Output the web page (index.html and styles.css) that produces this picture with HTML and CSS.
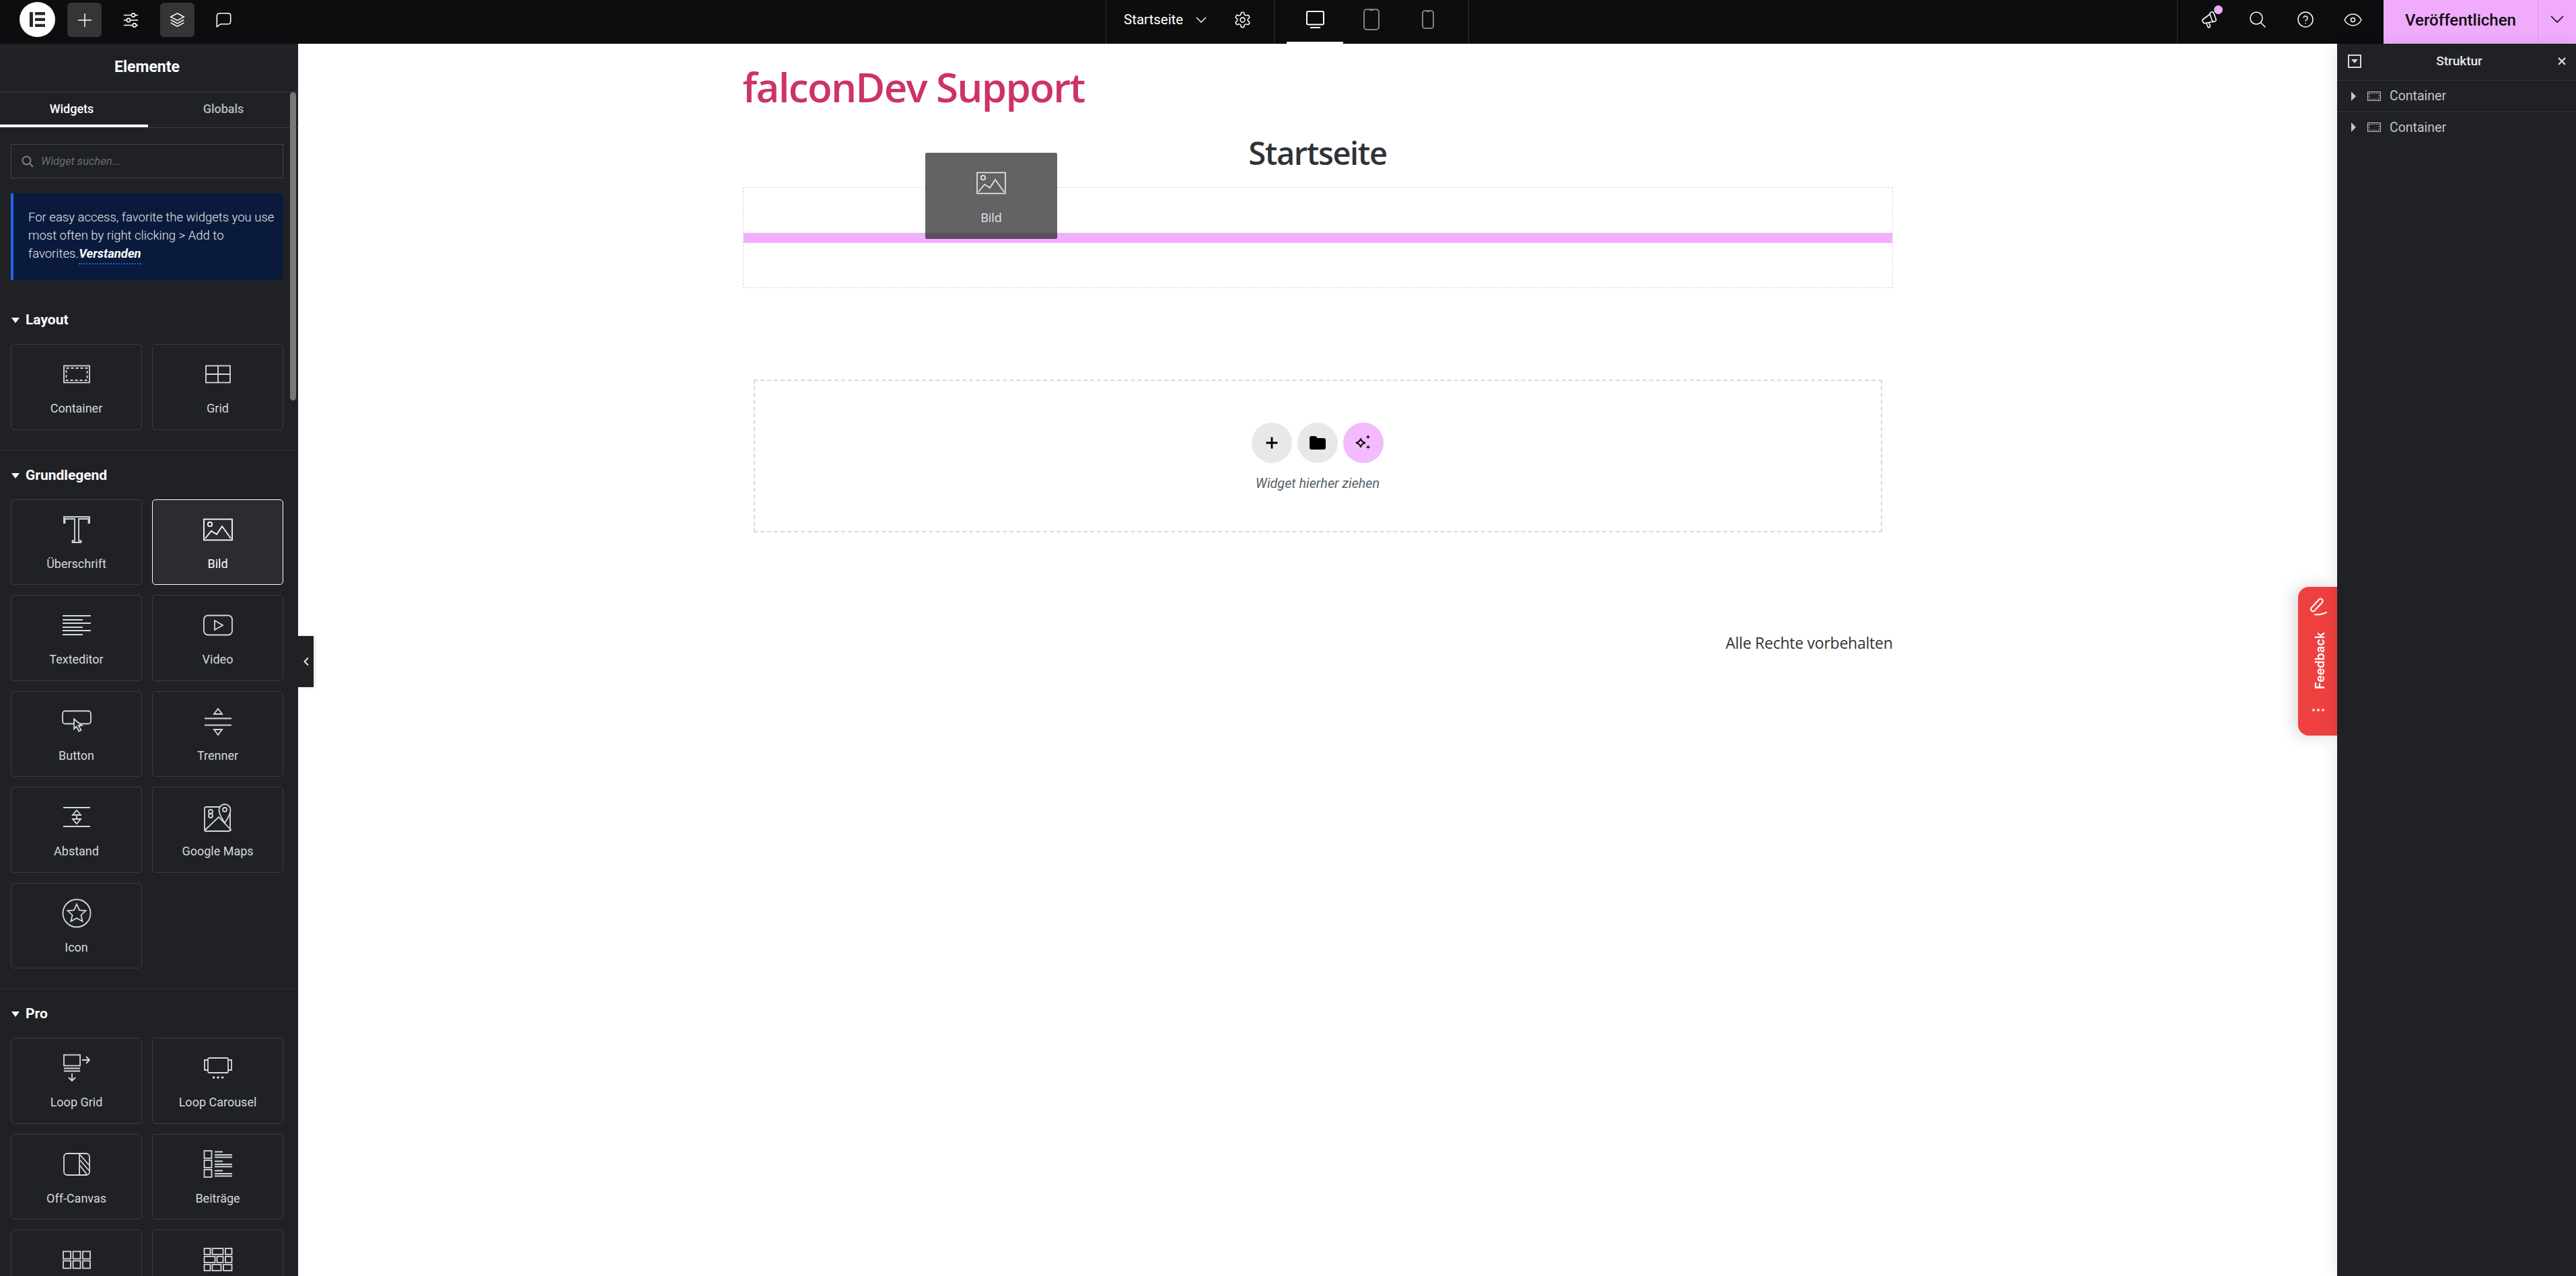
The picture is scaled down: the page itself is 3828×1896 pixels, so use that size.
FILE: index.html
```html
<!DOCTYPE html>
<html lang="de">
<head>
  <meta charset="UTF-8" />
  <title>Elementor - Startseite</title>
  <link rel="stylesheet" href="styles.css">
</head>
<body>
  <!-- Obere Leiste -->
  <header class="topbar">
    <div class="top-left">
      <div class="logo"><svg width="26" height="24" viewBox="0 0 26 24" fill="#26282b"><rect x="1" y="1" width="5" height="22"/><rect x="9" y="1" width="15" height="4.4"/><rect x="9" y="9.8" width="15" height="4.4"/><rect x="9" y="18.6" width="15" height="4.4"/></svg></div>
      <button class="top-btn active"><svg width="20" height="20" viewBox="0 0 20 20" fill="none" stroke="#fff" stroke-width="1.500"><path d="M10 0v20M0 10h20"/></svg></button>
      <button class="top-btn"><svg width="23" height="22" viewBox="0 0 26 25" fill="none" stroke="#fff" stroke-width="1.800"><path d="M1 4h13M20 4h5M1 12.500h5M12 12.500h13M1 21h15M22 21h3"/><circle cx="17" cy="4" r="3"/><circle cx="9" cy="12.500" r="3"/><circle cx="19" cy="21" r="3"/></svg></button>
      <button class="top-btn active"><svg width="23" height="23" viewBox="0 0 26 26" fill="none" stroke="#fff" stroke-width="1.700"><path d="M13 2 24 8l-11 6L2 8z"/><path d="m2 13 11 6 11-6"/><path d="m2 18 11 6 11-6"/></svg></button>
      <button class="top-btn"><svg width="23" height="23" viewBox="0 0 26 26" fill="none" stroke="#fff" stroke-width="1.800"><path d="M6 2h15a3.500 3.500 0 0 1 3.500 3.500v11A3.500 3.500 0 0 1 21 20H8l-6.500 4.500V6.500A4.500 4.500 0 0 1 6 2z"/></svg></button>
    </div>
    <div class="top-center">
      <div class="doc-section">
        <span class="doc-name">Startseite</span>
        <svg width="16" height="9" viewBox="0 0 16 9" fill="none" stroke="#fff" stroke-width="1.400"><path d="m1 1 7 7 7-7"/></svg>
        <svg class="gear" width="27" height="27" viewBox="0 0 24 24" fill="none" stroke="#fff" stroke-width="1.400"><path d="M12.220 2h-.44a2 2 0 0 0-2 2v.18a2 2 0 0 1-1 1.730l-.43.25a2 2 0 0 1-2 0l-.15-.08a2 2 0 0 0-2.730.73l-.22.38a2 2 0 0 0 .73 2.730l.15.1a2 2 0 0 1 1 1.720v.51a2 2 0 0 1-1 1.740l-.15.09a2 2 0 0 0-.73 2.730l.22.38a2 2 0 0 0 2.730.73l.15-.08a2 2 0 0 1 2 0l.43.25a2 2 0 0 1 1 1.730V20a2 2 0 0 0 2 2h.44a2 2 0 0 0 2-2v-.18a2 2 0 0 1 1-1.730l.43-.25a2 2 0 0 1 2 0l.15.08a2 2 0 0 0 2.730-.73l.22-.39a2 2 0 0 0-.73-2.730l-.15-.08a2 2 0 0 1-1-1.740v-.5a2 2 0 0 1 1-1.740l.15-.09a2 2 0 0 0 .73-2.730l-.22-.38a2 2 0 0 0-2.730-.73l-.15.08a2 2 0 0 1-2 0l-.43-.25a2 2 0 0 1-1-1.730V4a2 2 0 0 0-2-2z"/><circle cx="12" cy="12" r="3"/></svg>
      </div>
      <div class="device-section">
        <div class="device current"><svg width="27" height="26" viewBox="0 0 27 26" fill="none" stroke="#fff" stroke-width="2"><rect x="1" y="1" width="25" height="19.500" rx="2"/><path d="M6 25h15"/></svg></div>
        <div class="device"><svg width="24" height="32" viewBox="0 0 24 32" fill="none" stroke="#808285" stroke-width="2"><rect x="1" y="1" width="22" height="30" rx="4"/><path d="M9 2h6"/></svg></div>
        <div class="device"><svg width="18" height="28" viewBox="0 0 18 28" fill="none" stroke="#808285" stroke-width="2"><rect x="1" y="1" width="16" height="26" rx="3.500"/><path d="M7 2h4"/></svg></div>
      </div>
    </div>
    <div class="top-right">
      <div class="tool">
        <svg width="26" height="26" viewBox="0 0 26 26" fill="none" stroke="#fff" stroke-width="1.600" stroke-linejoin="round"><path d="M13 5 2.500 13a1.800 1.800 0 0 0-.5 2.300l1.300 2.400a1.800 1.800 0 0 0 2.200.8L19 16"/><rect x="14.500" y="1.500" width="6" height="15" rx="3" transform="rotate(-20 17.500 9)"/><path d="m7.500 18 2.500 6a1.800 1.800 0 0 0 3.300-1.300l-2-5.500"/></svg>
        <span class="badge"></span>
      </div>
      <div class="tool"><svg width="24" height="24" viewBox="0 0 24 24" fill="none" stroke="#fff" stroke-width="1.500"><circle cx="10" cy="10" r="9"/><path d="m16.500 16.500 7 7"/></svg></div>
      <div class="tool"><svg width="24" height="24" viewBox="0 0 24 24" fill="none" stroke="#fff" stroke-width="1.500"><circle cx="12" cy="12" r="11"/><path d="M9 9.500a3 3 0 0 1 6 .8c0 2-3 2.400-3 4.200"/><path d="M12 17v1.300"/></svg></div>
      <div class="tool"><svg width="27" height="19" viewBox="0 0 27 19" fill="none" stroke="#fff" stroke-width="1.500"><path d="M1 9.500C4 3.800 8.500 1 13.500 1s9.500 2.800 12.500 8.500C23 15.200 18.500 18 13.500 18S4 15.200 1 9.500z"/><circle cx="13.500" cy="9.500" r="3"/></svg></div>
      <div class="publish">
        <span class="publish-main">Veröffentlichen</span>
        <span class="publish-more"><svg width="20" height="12" viewBox="0 0 20 12" fill="none" stroke="#0c0d0e" stroke-width="1.600"><path d="m1 1 9 9 9-9"/></svg></span>
      </div>
    </div>
  </header>

  <div class="main">
    <!-- Linke Seitenleiste -->
    <aside class="sidebar">
      <div class="side-title">Elemente</div>
      <div class="tabs">
        <div class="tab current">Widgets</div>
        <div class="tab">Globals</div>
      </div>
      <div class="scrollbar"></div>
      <div class="search">
        <svg width="18" height="18" viewBox="0 0 18 18" fill="none" stroke="#7d8084" stroke-width="2"><circle cx="7.500" cy="7.500" r="6"/><path d="m12 12 5 5"/></svg>
        <span>Widget suchen...</span>
      </div>
      <div class="notice">For easy access, favorite the widgets you use most often by right clicking &gt; Add to favorites. <span class="notice-link">Verstanden</span></div>

      <section class="category">
        <h3 class="cat-title"><span class="caret-down"></span>Layout</h3>
        <div class="widget-grid">
          <div class="widget"><svg class="wicon" viewBox="0 0 44 44"><rect x="3" y="9.500" width="38" height="25"/><rect x="6.500" y="13" width="31" height="18" stroke-dasharray="4 3"/></svg><span>Container</span></div>
          <div class="widget"><svg class="wicon" viewBox="0 0 44 44"><rect x="4" y="9.500" width="36" height="25"/><path d="M22 9.500v25M4 22h36"/></svg><span>Grid</span></div>
        </div>
      </section>

      <section class="category">
        <h3 class="cat-title"><span class="caret-down"></span>Grundlegend</h3>
        <div class="widget-grid">
          <div class="widget"><svg class="wicon" viewBox="0 0 44 44"><path d="M3 12V3h38v9h-1.500V6H25v32.500h3.500V41h-13v-2.500H19V6H4.500v6z"/></svg><span>Überschrift</span></div>
          <div class="widget selected"><svg class="wicon" viewBox="0 0 44 44"><rect x="1" y="6.500" width="42" height="31"/><circle cx="10" cy="14" r="3.200"/><path d="m3 35 9-11 8 5 8-12 13 18"/></svg><span>Bild</span></div>
          <div class="widget"><svg class="wicon" viewBox="0 0 44 44"><path d="M1 8h42M1 14h30M1 19h42M1 25h30M1 30h42M1 36h30"/></svg><span>Texteditor</span></div>
          <div class="widget"><svg class="wicon" viewBox="0 0 44 44"><rect x="1" y="7.500" width="42" height="29" rx="6"/><path d="M17 15v14l12-7z"/></svg><span>Video</span></div>
          <div class="widget"><svg class="wicon" viewBox="0 0 44 44"><rect x="1" y="6.500" width="42" height="19" rx="4"/><path class="cursor" d="M18 18.500V33l3.500-3.500 3.800 7 3.200-1.700-3.800-6.800h5z"/></svg><span>Button</span></div>
          <div class="widget"><svg class="wicon" viewBox="0 0 44 44"><path d="m22 3 6 8H16zM2 17.500h40M2 27.500h40M16 34h12l-6 8z"/></svg><span>Trenner</span></div>
          <div class="widget"><svg class="wicon" viewBox="0 0 44 44"><path d="M2 8h40M2 36h40M22 12l6 7H16zM16 25h12l-6 7zM22 19v6"/></svg><span>Abstand</span></div>
          <div class="widget"><svg class="wicon" viewBox="0 0 44 44"><path d="M24 7H4a2 2 0 0 0-2 2v32a2 2 0 0 0 2 2h34a2 2 0 0 0 2-2V14"/><path d="m2 42 21-20 19 20"/><circle cx="11" cy="14" r="3"/><circle cx="11" cy="20" r="3"/><path d="M32 31c-4-7-8.500-12-8.500-19.500a8.500 8.500 0 0 1 17 0C40.500 19 36 24 32 31z" class="cursor"/><circle cx="32" cy="11" r="3"/></svg><span>Google Maps</span></div>
          <div class="widget"><svg class="wicon" viewBox="0 0 44 44"><circle cx="22" cy="22" r="20.500"/><path d="m22 8.500 4 8.800 9.500 1-7 6.400 2 9.400-8.500-4.800-8.500 4.800 2-9.400-7-6.400 9.500-1z"/></svg><span>Icon</span></div>
        </div>
      </section>

      <section class="category">
        <h3 class="cat-title"><span class="caret-down"></span>Pro</h3>
        <div class="widget-grid">
          <div class="widget"><svg class="wicon" viewBox="0 0 44 44"><rect x="3" y="2.500" width="24" height="16"/><path d="M3 22.500h24M3 26.500h24M30 10h11M36 5l5 5-5 5M15 30v11M10 36l5 5 5-5"/></svg><span>Loop Grid</span></div>
          <div class="widget"><svg class="wicon" viewBox="0 0 44 44"><rect x="7" y="7" width="30" height="22" rx="2"/><path d="M7 10H2v15h5M37 10h5v15h-5"/><path class="dots" d="M15.500 36h.1M22 36h.1M28.500 36h.1"/></svg><span>Loop Carousel</span></div>
          <div class="widget"><svg class="wicon" viewBox="0 0 44 44"><rect x="3" y="6" width="38" height="32" rx="5"/><path d="M26 6v32M27 8l13 15M27 16l13 15M27 24l10 13"/></svg><span>Off-Canvas</span></div>
          <div class="widget"><svg class="wicon" viewBox="0 0 44 44"><rect x="1.500" y="2" width="11" height="11"/><rect x="1.500" y="16" width="11" height="11"/><rect x="1.500" y="30" width="11" height="11"/><path d="M17 3.500h12M17 8h26M17 11.500h26M17 17.500h12M17 22h26M17 25.500h26M17 31.500h12M17 36h26M17 39.500h26"/></svg><span>Beiträge</span></div>
          <div class="widget"><svg class="wicon" viewBox="0 0 44 44"><rect x="2" y="9.500" width="11" height="11"/><rect x="16.500" y="9.500" width="11" height="11"/><rect x="31" y="9.500" width="11" height="11"/><rect x="2" y="23.500" width="11" height="11"/><rect x="16.500" y="23.500" width="11" height="11"/><rect x="31" y="23.500" width="11" height="11"/></svg></div>
          <div class="widget"><svg class="wicon" viewBox="0 0 44 44"><rect x="1.500" y="5" width="9" height="9"/><rect x="13.500" y="5" width="16" height="9"/><rect x="33" y="5" width="9.500" height="9"/><rect x="1.500" y="17" width="16" height="9"/><rect x="20.500" y="17" width="9" height="9"/><rect x="33" y="17" width="9.500" height="9"/><rect x="1.500" y="29" width="9" height="9"/><rect x="13.500" y="29" width="13" height="9"/><rect x="30" y="29" width="12.500" height="9"/></svg></div>
        </div>
      </section>
    </aside>

    <!-- Arbeitsfläche -->
    <main class="canvas">
      <button class="collapse"><svg width="10" height="14" viewBox="0 0 10 14" fill="none" stroke="#e6e8ea" stroke-width="2"><path d="M8 1.500 2.500 7 8 12.500"/></svg></button>

      <div class="page">
        <h1 class="site-title">falconDev Support</h1>
        <h2 class="page-title">Startseite</h2>
        <div class="container-box">
          <div class="drop-line"></div>
        </div>
        <div class="dropzone">
          <div class="drop-actions">
            <span class="round"><svg width="20" height="20" viewBox="0 0 20 20" fill="none" stroke="#000" stroke-width="2.800"><path d="M10 1.500v17M1.500 10h17"/></svg></span>
            <span class="round"><svg width="24" height="20" viewBox="0 0 24 20" fill="#000"><path d="M3 0h5.500a2 2 0 0 1 1.500.7L12 3h9a3 3 0 0 1 3 3v11a3 3 0 0 1-3 3H3a3 3 0 0 1-3-3V3a3 3 0 0 1 3-3z"/></svg></span>
            <span class="round ai"><svg width="26" height="24" viewBox="0 0 26 24" fill="none" stroke="#000" stroke-width="1.800"><path d="M9 5.500c.8 4 2.500 5.700 7 6.500-4.500.8-6.200 2.500-7 6.500-.8-4-2.500-5.700-7-6.500 4.500-.8 6.200-2.500 7-6.500z"/><path fill="#000" stroke="none" d="M20 0c.4 2 1.200 2.800 3.200 3.200-2 .4-2.800 1.200-3.200 3.200-.4-2-1.200-2.800-3.200-3.200 2-.4 2.800-1.200 3.200-3.200zM20 15c.4 2 1.200 2.800 3.200 3.200-2 .4-2.800 1.200-3.200 3.200-.4-2-1.200-2.800-3.200-3.200 2-.4 2.800-1.200 3.200-3.200z"/></svg></span>
          </div>
          <div class="drop-label">Widget hierher ziehen</div>
        </div>
        <div class="rights">Alle Rechte vorbehalten</div>
      </div>

      <!-- Widget wird gerade gezogen -->
      <div class="drag-ghost">
        <svg class="ghost-icon" viewBox="0 0 44 44"><rect x="1" y="6.500" width="42" height="31"/><circle cx="10" cy="14" r="3.200"/><path d="m3 35 9-11 8 5 8-12 13 18"/></svg>
        <span>Bild</span>
      </div>

      <div class="feedback">
        <svg width="30" height="30" viewBox="0 0 30 30" fill="none" stroke="#fff" stroke-width="2"><path d="m4 17 12-13a3 3 0 0 1 5 4L9 21a3.500 3.500 0 0 1-5-4z"/><path d="M10 26c5 1 10 0 17-3" stroke-linecap="round"/></svg>
        <span class="feedback-text">Feedback</span>
        <span class="feedback-dots"><i></i><i></i><i></i></span>
      </div>
    </main>

    <!-- Struktur-Panel -->
    <aside class="structure">
      <div class="structure-head">
        <svg width="20" height="20" viewBox="0 0 20 20"><rect x="1" y="1" width="18" height="18" fill="none" stroke="#d5d8dc" stroke-width="2"/><path d="M5 7h10l-5 6z" fill="#d5d8dc"/></svg>
        <span class="structure-title">Struktur</span>
        <svg width="14" height="14" viewBox="0 0 14 14" fill="none" stroke="#d5d8dc" stroke-width="2.400"><path d="m2 2 10 10M12 2 2 12"/></svg>
      </div>
      <div class="tree-row">
        <span class="caret-right"></span>
        <svg width="20" height="14" viewBox="0 0 20 14" fill="none" stroke="#c4c6c9" stroke-width="1"><rect x=".5" y=".5" width="19" height="13"/><rect x="2.500" y="2.500" width="15" height="9" stroke-dasharray="2 1.500"/></svg>
        <span>Container</span>
      </div>
      <div class="tree-row no-line">
        <span class="caret-right"></span>
        <svg width="20" height="14" viewBox="0 0 20 14" fill="none" stroke="#c4c6c9" stroke-width="1"><rect x=".5" y=".5" width="19" height="13"/><rect x="2.500" y="2.500" width="15" height="9" stroke-dasharray="2 1.500"/></svg>
        <span>Container</span>
      </div>
    </aside>
  </div>
</body>
</html>
```

FILE: styles.css
```css
* {
  box-sizing: border-box;
}

html, body {
  height: 100%;
}

body {
  margin: 0;
  overflow: hidden;
  font-family: 'Roboto', sans-serif;
  background-color: #fff;
  display: flex;
  flex-direction: column;
}

button {
  border: none;
  background: none;
  padding: 0;
}

/* Obere Leiste */
.topbar {
  height: 65px;
  flex: none;
  display: flex;
  background-color: #0c0d0e;
  color: #fff;
}

.top-left {
  width: 1643px;
  display: flex;
  align-items: flex-start;
  gap: 18px;
  padding: 3px 0 0 29px;
}

.logo {
  width: 53px;
  height: 52px;
  border-radius: 50%;
  background-color: #fff;
  display: flex;
  align-items: center;
  justify-content: center;
}

.top-btn {
  width: 51px;
  height: 51px;
  border-radius: 6px;
  margin-top: 1px;
  display: flex;
  align-items: center;
  justify-content: center;
}

.top-btn.active {
  background-color: #333537;
}

.top-center {
  display: flex;
}

.doc-section {
  width: 250px;
  display: flex;
  align-items: center;
  padding: 0 0 7px 26px;
  border-left: 1px solid #2d2f32;
}

.doc-name {
  font-size: 20.500px;
  margin-right: 19px;
}

.gear {
  margin-left: 40px;
}

.device-section {
  width: 290px;
  display: flex;
  padding-left: 18px;
  border-left: 1px solid #2d2f32;
  border-right: 1px solid #2d2f32;
}

.device {
  width: 84px;
  display: flex;
  align-items: center;
  justify-content: center;
  padding-bottom: 4px;
  border-bottom: 3px solid transparent;
}

.device.current {
  border-bottom-color: #fff;
}

.top-right {
  width: 593px;
  margin-left: auto;
  display: flex;
  padding-left: 12px;
  border-left: 1px solid #2d2f32;
}

.tool {
  width: 71px;
  display: flex;
  align-items: center;
  justify-content: center;
  padding-bottom: 7px;
  position: relative;
}

.badge {
  position: absolute;
  left: 42px;
  top: 8px;
  width: 13px;
  height: 13px;
  border-radius: 50%;
  background-color: #f0abfc;
}

.publish {
  margin-left: auto;
  width: 286px;
  display: flex;
  background-color: #f0abfc;
  color: #0c0d0e;
}

.publish-main {
  width: 230px;
  display: flex;
  align-items: center;
  justify-content: center;
  padding-bottom: 6px;
  font-size: 24px;
  font-weight: 500;
  border-right: 1px solid #e88ff8;
}

.publish-more {
  flex: 1;
  display: flex;
  align-items: center;
  justify-content: center;
  padding-bottom: 7px;
}

.main {
  flex: 1;
  min-height: 0;
  display: flex;
}

/* Linke Seitenleiste */
.sidebar {
  width: 443px;
  flex: none;
  position: relative;
  overflow: hidden;
  background-color: #1f2124;
  color: #d5d8dc;
}

.side-title {
  height: 72px;
  display: flex;
  align-items: center;
  justify-content: center;
  padding: 0 6px 3px 0;
  font-size: 23px;
  font-weight: 700;
  color: #fff;
  border-bottom: 1px solid #3a3d41;
}

.tabs {
  height: 53px;
  display: flex;
  border-bottom: 1px solid #3a3d41;
}

.tab {
  width: 220px;
  display: flex;
  align-items: center;
  justify-content: center;
  padding-bottom: 4px;
  font-size: 18px;
  font-weight: 500;
  color: #b6b9bd;
}

.tab.current {
  padding-right: 7px;
  color: #fff;
  box-shadow: inset 0 -4px 0 #fff;
}

.tab + .tab {
  padding-left: 4px;
}

.scrollbar {
  position: absolute;
  left: 431px;
  top: 72px;
  width: 9px;
  height: 458px;
  border-radius: 5px;
  background-color: #77787a;
}

.search {
  margin: 24px 22px 0 16px;
  height: 51px;
  display: flex;
  align-items: center;
  gap: 11px;
  padding-left: 15px;
  border: 1px solid #3f444b;
  font-size: 16.500px;
  font-style: italic;
  color: #6a6e73;
}

.notice {
  margin: 22px 22px 23px 16px;
  height: 129px;
  padding: 23px 10px 0 22px;
  border-left: 4px solid #2563eb;
  border-radius: 2px 6px 6px 2px;
  background-color: #0a1a3c;
  font-size: 18.500px;
  font-weight: 300;
  line-height: 27px;
  color: #e6e8ea;
}

.notice-link {
  margin-left: -4px;
  font-style: italic;
  font-weight: 700;
  color: #fff;
  padding-bottom: 3px;
  border-bottom: 2px dotted #2563eb;
}

.category {
  padding: 24px 22px 30px 16px;
  border-bottom: 1px solid #2f3135;
}

.cat-title {
  margin: 0 0 24px;
  height: 24px;
  display: flex;
  align-items: center;
  font-size: 21px;
  font-weight: 700;
  color: #fff;
}

.caret-down {
  width: 0;
  height: 0;
  margin: 2px 9px 0 1px;
  border-style: solid;
  border-width: 8px 6px 0;
  border-color: #fff transparent transparent;
}

.widget-grid {
  display: grid;
  grid-template-columns: 195px 195px;
  grid-auto-rows: 127.500px;
  gap: 15px;
}

.widget {
  display: flex;
  flex-direction: column;
  align-items: center;
  padding-top: 22px;
  border: 1px solid #3a3d41;
  border-radius: 5px;
  font-size: 18px;
  color: #d5d8dc;
}

.widget span {
  margin-top: 18px;
  line-height: 22px;
}

.widget.selected {
  border-color: #fff;
  background-color: #2b2c31;
  color: #fff;
}

.wicon {
  width: 44px;
  height: 44px;
  flex: none;
  fill: none;
  stroke: currentColor;
  stroke-width: 1.800;
}

.wicon .cursor {
  fill: #1f2124;
}

.wicon .dots {
  stroke-width: 3.600;
  stroke-linecap: round;
}

/* Arbeitsfläche */
.canvas {
  flex: 1;
  position: relative;
  background-color: #fff;
}

.collapse {
  position: absolute;
  left: 0;
  top: 880px;
  width: 23px;
  height: 76px;
  display: flex;
  align-items: center;
  justify-content: center;
  background-color: #1f2124;
  box-shadow: 2px 0 6px rgba(0,0,0,0.12);
}

.page {
  width: 1709px;
  margin: 0 auto;
}

.site-title {
  margin: 0;
  height: 130px;
  font-family: 'Open Sans', sans-serif;
  font-size: 60px;
  font-weight: 600;
  line-height: 128px;
  letter-spacing: -1.650px;
  color: #cc3366;
}

.page-title {
  margin: 0;
  height: 62px;
  font-family: 'Open Sans', sans-serif;
  font-size: 47px;
  font-weight: 600;
  line-height: 64px;
  letter-spacing: -1.400px;
  text-align: center;
  color: #2f3237;
}

.container-box {
  margin-top: 21px;
  height: 150px;
  padding-top: 67px;
  border: 1px dashed #d5d8dc;
}

.drop-line {
  height: 15px;
  background-color: #f0b0fc;
}

.dropzone {
  margin: 136px 16px 0;
  height: 227px;
  padding-top: 62px;
  display: flex;
  flex-direction: column;
  align-items: center;
  border: 2px dashed #d5d8dc;
}

.drop-actions {
  display: flex;
  gap: 8px;
}

.round {
  width: 60px;
  height: 60px;
  border-radius: 50%;
  background-color: #e6e8ea;
  display: flex;
  align-items: center;
  justify-content: center;
}

.round.ai {
  background-color: #f3bafd;
}

.drop-label {
  margin-top: 19px;
  font-size: 19.800px;
  font-style: italic;
  color: #556068;
}

.rights {
  margin-top: 144px;
  line-height: 40px;
  text-align: right;
  font-family: 'Open Sans', sans-serif;
  font-size: 23px;
  letter-spacing: -0.250px;
  color: #2f3237;
}

.drag-ghost {
  position: absolute;
  left: 932px;
  top: 162px;
  width: 196px;
  height: 128px;
  display: flex;
  flex-direction: column;
  align-items: center;
  padding-top: 23px;
  border-radius: 2px;
  background-color: rgba(31,33,36,0.7);
  color: #e6e8ea;
  font-family: 'Open Sans', sans-serif;
  font-size: 18px;
}

.ghost-icon {
  width: 44px;
  height: 44px;
  fill: none;
  stroke: currentColor;
  stroke-width: 1.700;
}

.drag-ghost span {
  margin-top: 17px;
}

.feedback {
  position: absolute;
  right: 0;
  top: 807px;
  width: 58px;
  height: 221px;
  display: flex;
  flex-direction: column;
  align-items: center;
  padding: 15px 3px 0 5px;
  border-radius: 16px 0 0 16px;
  background-color: #ef4040;
  box-shadow: -6px 0 24px rgba(0,0,0,0.15);
  color: #fff;
}

.feedback-text {
  margin: 22px 0 0 5px;
  writing-mode: vertical-rl;
  transform: rotate(180deg);
  font-family: 'Inter', sans-serif;
  font-size: 18px;
  font-weight: 600;
  line-height: 22px;
}

.feedback-dots {
  margin-top: 29px;
  display: flex;
  gap: 3px;
}

.feedback-dots i {
  width: 4px;
  height: 4px;
  border-radius: 50%;
  background-color: #ffd9d9;
}

/* Struktur-Panel */
.structure {
  width: 355px;
  flex: none;
  background-color: #1f2124;
  color: #c4c6c9;
  box-shadow: -4px 0 20px rgba(0,0,0,0.08);
  z-index: 1;
}

.structure-head {
  height: 55px;
  display: flex;
  align-items: center;
  padding: 0 14px 3px 16px;
  border-bottom: 1px solid #33363a;
}

.structure-title {
  flex: 1;
  text-align: center;
  font-size: 19px;
  font-weight: 500;
  color: #e6e8ea;
}

.tree-row {
  height: 46px;
  display: flex;
  align-items: center;
  padding-left: 21px;
  font-size: 19.500px;
  border-bottom: 1px solid #33363a;
}

.tree-row.no-line {
  border-bottom: none;
}

.caret-right {
  width: 0;
  height: 0;
  margin-right: 17px;
  border-style: solid;
  border-width: 7px 0 7px 7px;
  border-color: transparent transparent transparent #c4c6c9;
}

.tree-row svg {
  margin-right: 13px;
}
```
